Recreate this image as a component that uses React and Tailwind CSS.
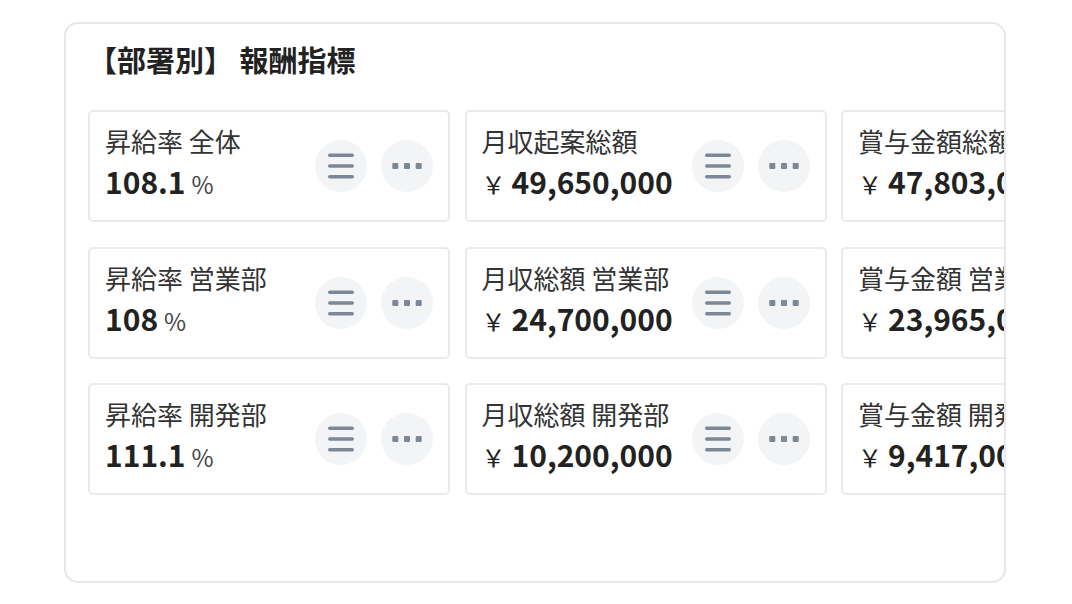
import React from 'react';

const rows = [
  [
    { label: '昇給率 全体', value: '108.1', unit: '%' },
    { label: '月収起案総額', value: '49,650,000', yen: true },
    { label: '賞与金額総額', value: '47,803,000', yen: true },
  ],
  [
    { label: '昇給率 営業部', value: '108', unit: '%' },
    { label: '月収総額 営業部', value: '24,700,000', yen: true },
    { label: '賞与金額 営業部', value: '23,965,000', yen: true },
  ],
  [
    { label: '昇給率 開発部', value: '111.1', unit: '%' },
    { label: '月収総額 開発部', value: '10,200,000', yen: true },
    { label: '賞与金額 開発部', value: '9,417,000', yen: true },
  ],
];

const MenuIcon = () => (
  <svg width="28" height="28" viewBox="0 0 28 28" fill="none" stroke="#7c8798" strokeWidth="3.6" strokeLinecap="round">
    <line x1="2.8" y1="3.3" x2="25.2" y2="3.3" />
    <line x1="2.8" y1="14" x2="25.2" y2="14" />
    <line x1="2.8" y1="24.7" x2="25.2" y2="24.7" />
  </svg>
);

const DotsIcon = () => (
  <svg width="30" height="8" viewBox="0 0 30 8" fill="#7c8798">
    <rect x="0.3" y="1" width="6" height="6" rx="1" />
    <rect x="12" y="1" width="6" height="6" rx="1" />
    <rect x="23.7" y="1" width="6" height="6" rx="1" />
  </svg>
);

const MetricCard = ({ label, value, unit, yen }) => (
  <div className="w-[362px] h-[112px] shrink-0 flex items-center justify-between border-2 border-[#e8eaed] rounded-[5px] bg-white pl-[15px] pr-[15px]">
    <div className="whitespace-nowrap">
      <div className="text-[26px] leading-[32px] text-[#333]">{label}</div>
      <div className="mt-[4px] leading-[40px] text-[#222]">
        {yen && <span className="text-[24px] mr-[6px]">￥</span>}
        <span className="text-[30px] font-bold">{value}</span>
        {unit && <span className="text-[24px] text-[#444] ml-[6px]">{unit}</span>}
      </div>
    </div>
    <div className="flex items-center gap-[14px]">
      <button className="w-[52px] h-[52px] rounded-full bg-[#f2f4f6] flex items-center justify-center">
        <MenuIcon />
      </button>
      <button className="w-[52px] h-[52px] rounded-full bg-[#f2f4f6] flex items-center justify-center">
        <DotsIcon />
      </button>
    </div>
  </div>
);

export default function App() {
  return (
    <div className="w-[1072px] h-[604px] bg-white pt-[22px] pl-[64px] font-['Noto_Sans_CJK_JP',sans-serif]">
      <div className="w-[942px] h-[561px] border-2 border-[#e5e7eb] rounded-[14px] overflow-hidden pt-[15px] pl-[22px]">
        <h1 className="text-[29px] leading-[40px] font-bold text-[#222] whitespace-nowrap">【部署別】 報酬指標</h1>
        <div className="mt-[31px] flex flex-col gap-y-[24.5px]">
          {rows.map((row, i) => (
            <div key={i} className="flex gap-x-[14.5px]">
              {row.map((card, j) => (
                <MetricCard key={j} {...card} />
              ))}
            </div>
          ))}
        </div>
      </div>
    </div>
  );
}
